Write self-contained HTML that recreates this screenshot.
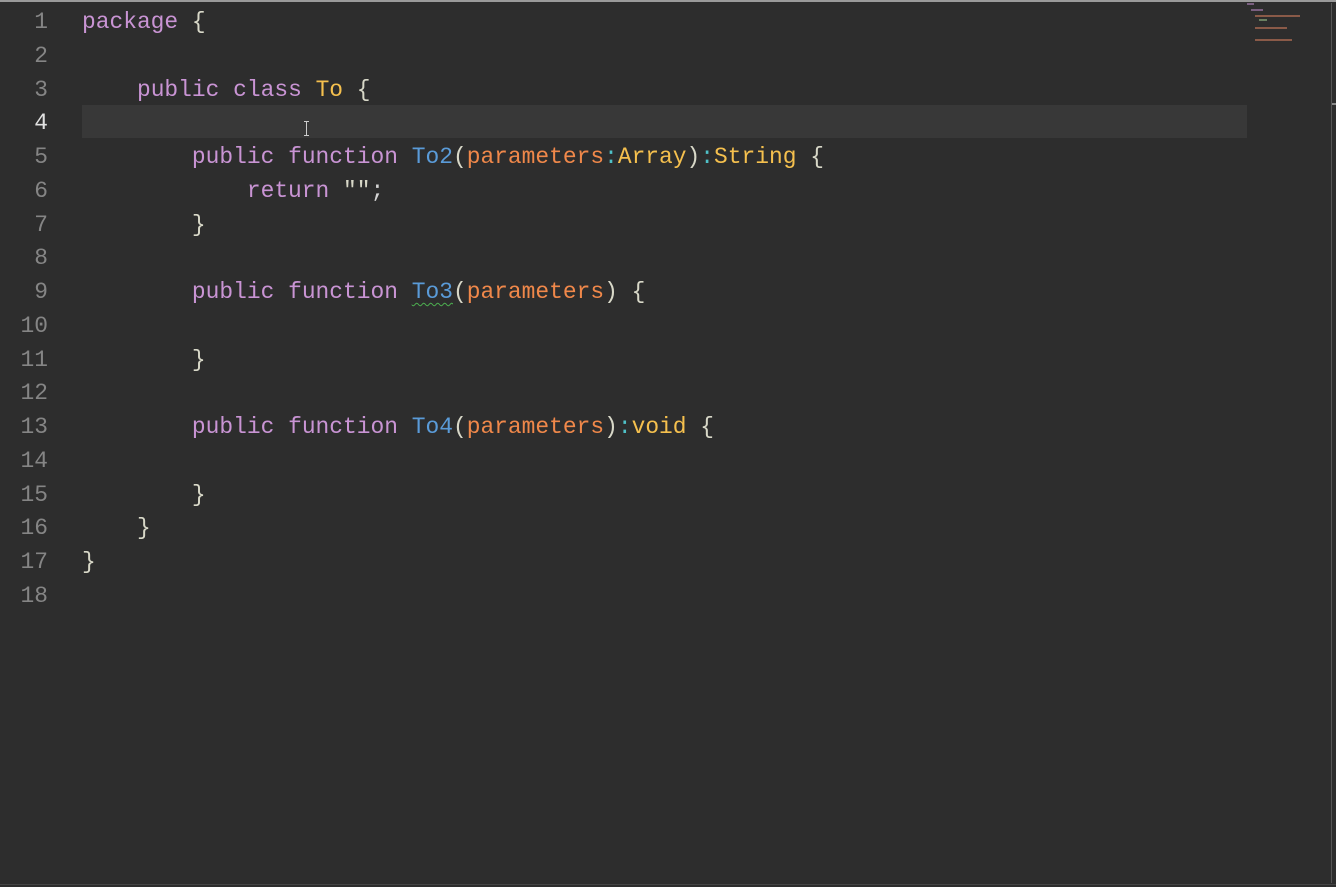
<!DOCTYPE html>
<html><head><meta charset="utf-8"><style>
html,body{margin:0;padding:0;}
body{width:1336px;height:887px;background:#2d2d2d;position:relative;overflow:hidden;font-family:"Liberation Mono",monospace;font-size:22.9px;}
.top{position:absolute;left:0;top:0;width:1336px;height:2px;background:#9a9a9a;}
.bot{position:absolute;left:0;top:884px;width:1336px;height:1px;background:#444;}
.hl{position:absolute;left:82px;top:105px;width:1165px;height:33px;background:#383838;}
.ln{position:absolute;left:0;width:48px;text-align:right;color:#858585;line-height:33.75px;}
.code{position:absolute;left:82px;white-space:pre;line-height:33.75px;color:#d4d4d4;}
.k{color:#c994d4}.t{color:#f5c04e}.f{color:#5a9bd8}.p{color:#f0884a}.c{color:#4fc1c8}.b{color:#d8d8c8}
.sq{text-decoration:underline wavy #4caf50;text-underline-offset:4px;text-decoration-thickness:1px}
.sb{position:absolute;left:1331px;top:3px;width:1px;height:880px;background:#555;}
.mm div{position:absolute;height:2px;}
</style></head><body>
<div class="top"></div>
<div class="hl"></div>
<div class="ln" style="top:6px">1<br>2<br>3<br><span style="color:#e0e0e0">4</span><br>5<br>6<br>7<br>8<br>9<br>10<br>11<br>12<br>13<br>14<br>15<br>16<br>17<br>18</div>
<div class="code" style="top:6px"><span class="k">package</span> <span class="b">{</span>

    <span class="k">public</span> <span class="k">class</span> <span class="t">To</span> <span class="b">{</span>

        <span class="k">public</span> <span class="k">function</span> <span class="f">To2</span><span class="b">(</span><span class="p">parameters</span><span class="c">:</span><span class="t">Array</span><span class="b">)</span><span class="c">:</span><span class="t">String</span> <span class="b">{</span>
            <span class="k">return</span> <span class="b">""</span>;
        <span class="b">}</span>

        <span class="k">public</span> <span class="k">function</span> <span class="f sq">To3</span><span class="b">(</span><span class="p">parameters</span><span class="b">)</span> <span class="b">{</span>

        <span class="b">}</span>

        <span class="k">public</span> <span class="k">function</span> <span class="f">To4</span><span class="b">(</span><span class="p">parameters</span><span class="b">)</span><span class="c">:</span><span class="t">void</span> <span class="b">{</span>

        <span class="b">}</span>
    <span class="b">}</span>
<span class="b">}</span>
</div>
<div style="position:absolute;left:306px;top:121px;width:1px;height:14px;background:#ccc"></div>
<div style="position:absolute;left:304px;top:121px;width:5px;height:1px;background:#ccc"></div>
<div style="position:absolute;left:304px;top:135px;width:5px;height:1px;background:#ccc"></div>
<div class="mm">
<div style="left:1247px;top:3px;width:7px;background:#7a5f80"></div>
<div style="left:1251px;top:9px;width:12px;background:#7a5f80"></div>
<div style="left:1255px;top:15px;width:45px;background:#8a5a48"></div>
<div style="left:1259px;top:19px;width:8px;background:#6a8060"></div>
<div style="left:1255px;top:27px;width:32px;background:#8a5a48"></div>
<div style="left:1255px;top:39px;width:37px;background:#8a5a48"></div>
</div>
<div style="position:absolute;left:1331px;top:103px;width:5px;height:2px;background:#888"></div>
<div class="sb"></div>
<div class="bot"></div>
</body></html>
